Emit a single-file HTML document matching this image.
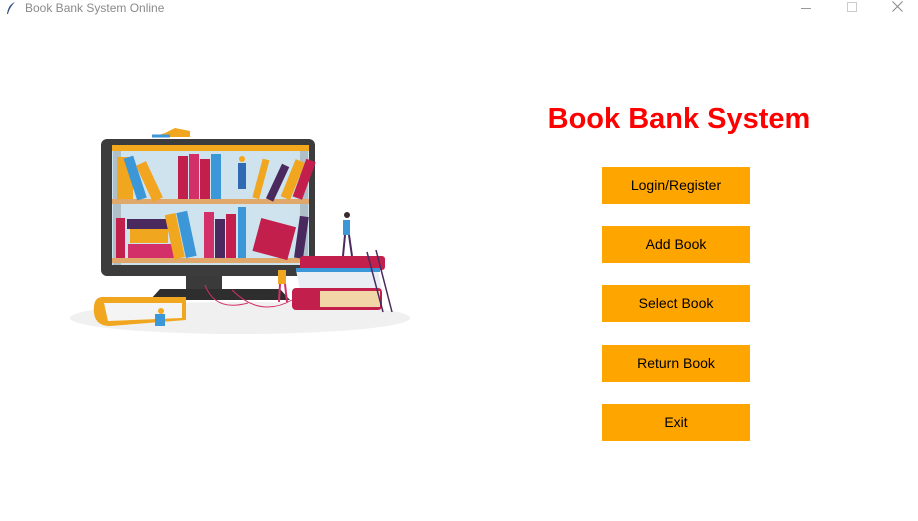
<!DOCTYPE html>
<html><head><meta charset="utf-8"><style>
html,body{margin:0;padding:0;width:918px;height:521px;background:#fff;overflow:hidden;font-family:"Liberation Sans",Arial,sans-serif;position:relative}
.tb{position:absolute;left:0;top:0;width:918px;height:18px;}
.tb .t{position:absolute;left:25px;top:1px;font-size:12px;color:#8a8a8a}
.btn{position:absolute;left:602px;width:148px;height:37px;background:#FFA500;color:#000;font-size:14px;text-align:center;line-height:37px}
h1{position:absolute;left:540px;width:278px;top:102px;margin:0;text-align:center;color:#f00;font-size:29px;font-weight:bold;line-height:34px}
</style></head><body>
<div class="tb">
<svg style="position:absolute;left:6px;top:2px" width="10" height="13" viewBox="0 0 10 13"><path d="M9 0 C4 2 2 6 1 12 L2 12 C3 8 5 4 9 0Z" fill="#2a4a7a"/></svg>
<div class="t">Book Bank System Online</div>
<div style="position:absolute;left:801px;top:8px;width:10px;height:1px;background:#999"></div>
<div style="position:absolute;left:847px;top:2px;width:8px;height:8px;border:1px solid #ccc"></div>
<svg style="position:absolute;left:892px;top:1px" width="11" height="11"><path d="M0.5 0.5L10.5 10.5M10.5 0.5L0.5 10.5" stroke="#888" stroke-width="1"/></svg>
</div>
<svg style="position:absolute;left:0;top:0" width="520" height="521" viewBox="0 0 520 521">
<ellipse cx="240" cy="318" rx="170" ry="16" fill="#f0f0f0"/>
<rect x="186" y="272" width="36" height="20" fill="#3a3a3a"/>
<path d="M150 300 L160 289 L280 289 L290 300Z" fill="#2e2e2e"/>
<rect x="101" y="139" width="214" height="137" rx="6" fill="#3c3c3c"/>
<rect x="112" y="145" width="197" height="120" fill="#cfe3ee"/>
<rect x="112" y="145" width="197" height="6" fill="#f4a81d"/>
<rect x="113" y="151" width="8" height="114" fill="#9aa6ad" opacity=".6"/>
<rect x="300" y="151" width="8" height="114" fill="#9aa6ad" opacity=".6"/>
<rect x="112" y="199" width="197" height="5" fill="#e0a86a"/>
<rect x="112" y="258" width="197" height="5" fill="#e0a86a"/>
<rect x="117" y="157" width="16" height="42" fill="#f0a61e"/>
<rect x="137" y="155" width="10" height="44" fill="#3c97d8" transform="rotate(-18 142 199)"/>
<rect x="152" y="160" width="11" height="40" fill="#f1a520" transform="rotate(-25 157 199)"/>
<rect x="178" y="156" width="10" height="43" fill="#c31f4c"/>
<rect x="189" y="154" width="10" height="45" fill="#d3306a"/>
<rect x="200" y="159" width="10" height="40" fill="#c31f4c"/>
<rect x="211" y="154" width="10" height="45" fill="#3c97d8"/>
<rect x="252" y="158" width="7" height="40" fill="#f0a61e" transform="rotate(15 255 199)"/>
<rect x="266" y="162" width="8" height="38" fill="#4a2a5e" transform="rotate(25 270 199)"/>
<rect x="280" y="158" width="10" height="40" fill="#f0a61e" transform="rotate(22 285 199)"/>
<rect x="292" y="158" width="10" height="40" fill="#c31f4c" transform="rotate(20 297 199)"/>
<rect x="238" y="163" width="8" height="26" fill="#2f6ab3"/>
<circle cx="242" cy="159" r="3" fill="#f4a81d"/>
<rect x="116" y="218" width="9" height="40" fill="#c31f4c"/>
<rect x="127" y="219" width="42" height="10" fill="#4a2a5e"/>
<rect x="130" y="229" width="38" height="14" fill="#f0a61e"/>
<rect x="128" y="244" width="46" height="14" fill="#d3306a"/>
<rect x="174" y="213" width="11" height="45" fill="#f0a61e" transform="rotate(-12 180 258)"/>
<rect x="186" y="211" width="11" height="46" fill="#3c97d8" transform="rotate(-12 191 258)"/>
<rect x="204" y="212" width="10" height="46" fill="#d3306a"/>
<rect x="215" y="219" width="10" height="39" fill="#4a2a5e"/>
<rect x="226" y="214" width="10" height="44" fill="#c31f4c"/>
<rect x="238" y="207" width="8" height="51" fill="#3c97d8"/>
<rect x="256" y="222" width="36" height="34" fill="#c31f4c" transform="rotate(15 274 240)"/>
<rect x="294" y="216" width="9" height="42" fill="#4a2a5e" transform="rotate(8 298 258)"/>
<rect x="300" y="256" width="85" height="14" rx="3" fill="#c31f4c"/>
<path d="M296 270 L378 270 L382 290 L300 290Z" fill="#e8eef3"/>
<rect x="296" y="268" width="84" height="4" fill="#3c97d8"/>
<rect x="292" y="288" width="90" height="22" rx="4" fill="#c31f4c"/>
<rect x="320" y="291" width="60" height="16" fill="#f2d6a8"/>
<path d="M367 252 L383 312 M376 250 L392 312" stroke="#4a2a5e" stroke-width="1.5"/>
<rect x="343" y="220" width="7" height="15" fill="#3c97d8"/><path d="M345 235 L343 256 M349 235 L352 256" stroke="#4a2a5e" stroke-width="2"/><circle cx="347" cy="215" r="3" fill="#3a2a2a"/>
<path d="M94 306 Q95 296 105 297 L186 297 L186 320 L110 326 Q92 326 94 306Z" fill="#f0a61e"/>
<path d="M104 303 L182 303 L182 318 L108 321Z" fill="#f4f4f4"/>
<rect x="155" y="314" width="10" height="12" fill="#3c97d8"/><circle cx="161" cy="311" r="3" fill="#f4a81d"/>
<path d="M152 137 L190 137 L190 131 L175 128 L165 133Z" fill="#f0a61e"/><path d="M152 136 L170 136" stroke="#3c97d8" stroke-width="3"/>
<rect x="278" y="270" width="8" height="14" fill="#f0a61e"/><path d="M280 284 L279 302 M285 284 L287 302" stroke="#d3306a" stroke-width="2"/>
<path d="M205 285 Q215 312 248 303 M232 290 Q260 318 292 300" stroke="#d3306a" stroke-width="1" fill="none"/>
</svg>
<h1>Book Bank System</h1>
<div class="btn" style="top:167px">Login/Register</div>
<div class="btn" style="top:226px">Add Book</div>
<div class="btn" style="top:285px">Select Book</div>
<div class="btn" style="top:345px">Return Book</div>
<div class="btn" style="top:404px">Exit</div>
</body></html>
